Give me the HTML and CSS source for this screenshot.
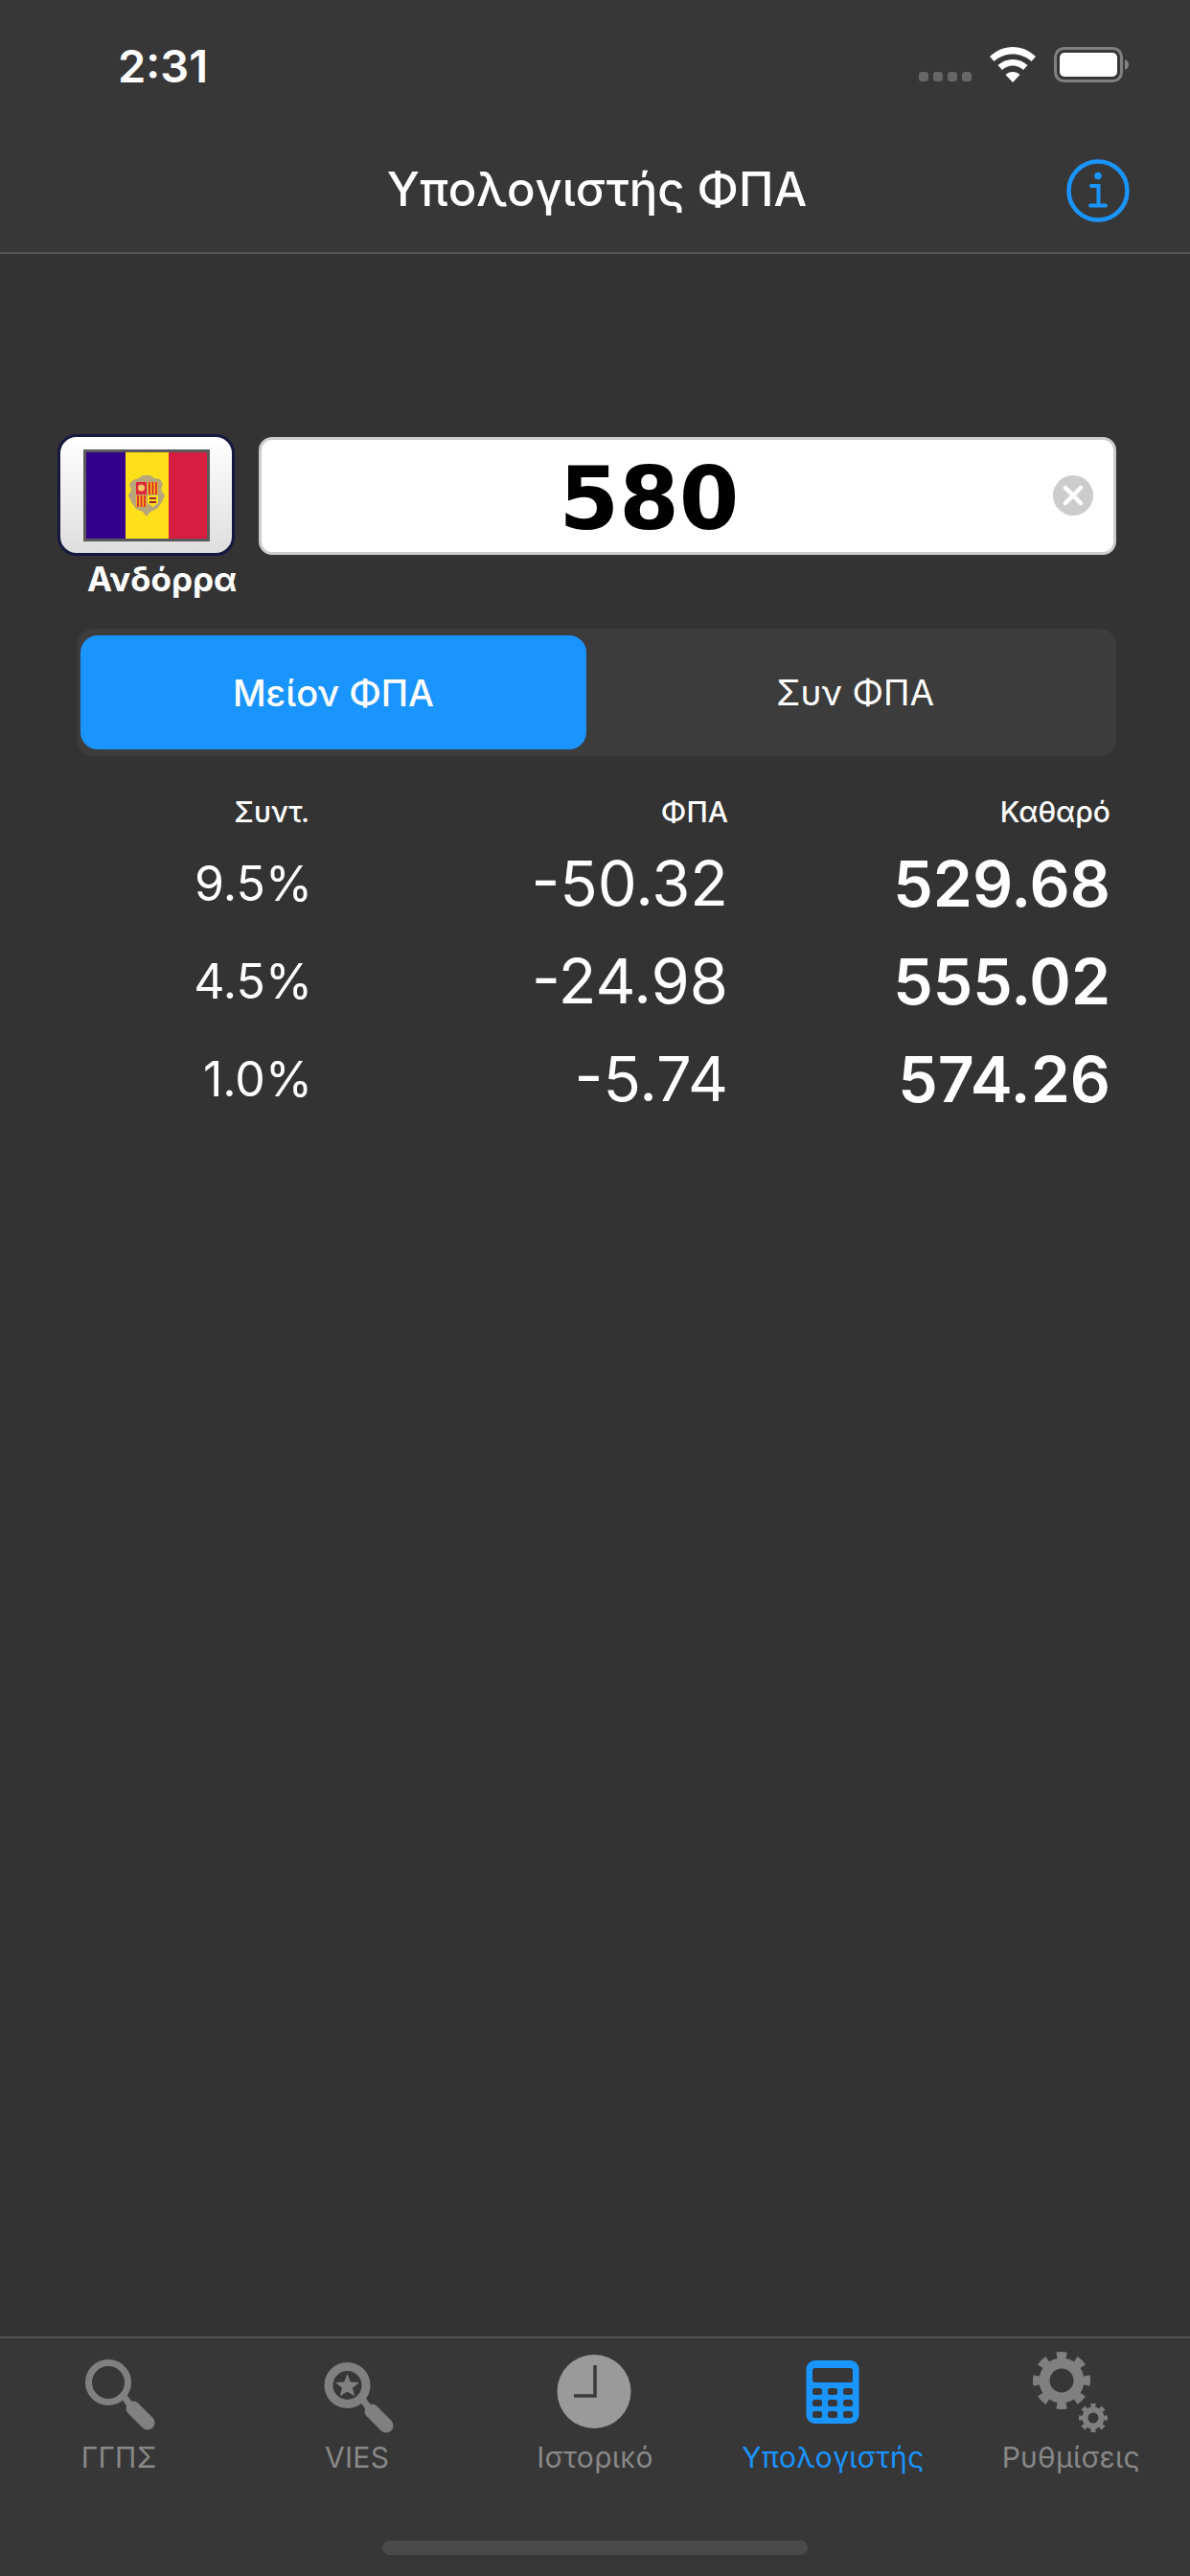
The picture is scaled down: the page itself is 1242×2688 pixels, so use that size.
FILE: index.html
```html
<!DOCTYPE html>
<html lang="el">
<head>
<meta charset="utf-8">
<title>Υπολογιστής ΦΠΑ</title>
<link rel="stylesheet" href="styles.css">
</head>
<body>
<div class="app">
  <header class="top">
    <div class="status">
      <span class="time">2:31</span>
      <div class="status-icons">
        <div class="signal"><i></i><i></i><i></i><i></i></div>
        <svg class="wifi" width="48" height="37" viewBox="0 0 48 37">
          <path d="M24 0C15 0 7 3.500 0 10L4.500 15C10 10 17 7.500 24 7.500S38 10 43.500 15L48 10C41 3.500 33 0 24 0Z" fill="#fff"/>
          <path d="M24 13C18 13 13 15 8.500 19L13 24C16 21 20 19.500 24 19.500S32 21 35 24L39.500 19C35 15 30 13 24 13Z" fill="#fff"/>
          <path d="M24 26C21 26 18.500 27 16.500 29L24 37L31.500 29C29.500 27 27 26 24 26Z" fill="#fff"/>
        </svg>
        <svg class="battery" width="80" height="38" viewBox="0 0 80 38">
          <rect x="1.500" y="1.500" width="69" height="34" rx="9" fill="none" stroke="#808080" stroke-width="3"/>
          <rect x="6" y="6" width="60" height="25" rx="5" fill="#fff"/>
          <path d="M74 13C77 14 78 16 78 18.500S77 23 74 24Z" fill="#808080"/>
        </svg>
      </div>
    </div>
    <div class="nav">
      <h1 class="nav-title">Υπολογιστής ΦΠΑ</h1>
      <svg class="info" width="66" height="66" viewBox="0 0 66 66">
        <circle cx="33" cy="33" r="30.500" fill="none" stroke="#1a94ff" stroke-width="4.500"/>
        <circle cx="33" cy="17.500" r="3.800" fill="#1a94ff"/>
        <path d="M26 28H33.500V47M25 48.500H41" fill="none" stroke="#1a94ff" stroke-width="4" stroke-linecap="round"/>
      </svg>
    </div>
  </header>

  <main class="main">
    <div class="entry">
      <div class="country">
        <button class="flag-btn" type="button">
          <svg class="flag" width="132" height="96" viewBox="0 0 132 96">
            <rect width="132" height="96" fill="#5a5a5a"/>
            <rect x="3" y="3" width="41" height="90" fill="#33008c"/>
            <rect x="44" y="3" width="45" height="90" fill="#fde01a"/>
            <rect x="89" y="3" width="40" height="90" fill="#d81e40"/>
            <path d="M52 32L58 30L62 27H70L74 30L80 31L83 36L81 42L85 48L82 55L77 62L70 65L66 70L62 65L55 62L50 55L47 48L50 42L48 36Z" fill="#b8a57a"/>
            <rect x="55" y="34" width="11" height="13" fill="#e0263a"/>
            <circle cx="60.500" cy="40" r="3.500" fill="#f7c766"/>
            <rect x="67" y="34" width="11" height="13" fill="#f5b21a"/>
            <path d="M69 34V47M72.500 34V47M76 34V47" stroke="#d81e30" stroke-width="1.600"/>
            <rect x="55" y="48" width="11" height="12" fill="#f5b21a"/>
            <path d="M57 48V60M60.500 48V60M64 48V60" stroke="#d81e30" stroke-width="1.600"/>
            <path d="M67 48H78V56L72.500 60L67 56Z" fill="#fde01a"/>
            <path d="M69 51H76M69 55H76" stroke="#a02030" stroke-width="2"/>
          </svg>
        </button>
        <span class="country-name">Ανδόρρα</span>
      </div>
      <div class="amount">
        <span class="amount-value">580</span>
        <svg class="clear" width="42" height="42" viewBox="0 0 42 42">
          <circle cx="21" cy="21" r="21" fill="#ccc"/>
          <path d="M13 13L29 29M29 13L13 29" stroke="#fff" stroke-width="4.500" stroke-linecap="round"/>
        </svg>
      </div>
    </div>

    <div class="segment">
      <div class="seg seg-on">Μείον ΦΠΑ</div>
      <div class="seg seg-off">Συν ΦΠΑ</div>
    </div>

    <div class="table">
      <span class="th th-rate">Συντ.</span><span class="th">ΦΠΑ</span><span class="th">Καθαρό</span>
      <span class="rate">9.5%</span><span class="vat">-50.32</span><span class="net">529.68</span>
      <span class="rate">4.5%</span><span class="vat">-24.98</span><span class="net">555.02</span>
      <span class="rate">1.0%</span><span class="vat">-5.74</span><span class="net">574.26</span>
    </div>
  </main>

  <nav class="tabs">
    <div class="tab-row">
      <div class="tab">
        <svg class="tab-icon" width="90" height="90" viewBox="0 0 90 90">
          <circle cx="34" cy="36" r="20.500" fill="none" stroke="#808080" stroke-width="7"/>
          <path d="M50 50L57 60" stroke="#808080" stroke-width="7"/>
          <path d="M60 63L75 78" stroke="#808080" stroke-width="15" stroke-linecap="round"/>
        </svg>
        <span>ΓΓΠΣ</span>
      </div>
      <div class="tab">
        <svg class="tab-icon" width="90" height="90" viewBox="0 0 90 90">
          <circle cx="34.500" cy="39" r="19.500" fill="none" stroke="#808080" stroke-width="9"/>
          <path d="M34.500 27L37.800 35.500L47 36L39.900 41.700L42.300 50.500L34.500 45.500L26.700 50.500L29.100 41.700L22 36L31.200 35.500Z" fill="#808080"/>
          <path d="M50 53L57 63" stroke="#808080" stroke-width="7"/>
          <path d="M60 66L75 81" stroke="#808080" stroke-width="15" stroke-linecap="round"/>
        </svg>
        <span>VIES</span>
      </div>
      <div class="tab">
        <svg class="tab-icon" width="90" height="90" viewBox="0 0 90 90">
          <circle cx="44" cy="45.500" r="38.500" fill="#9a9a9a"/>
          <path d="M23 50H45V18" fill="none" stroke="#3a3a3a" stroke-width="3.500"/>
        </svg>
        <span>Ιστορικό</span>
      </div>
      <div class="tab tab-on">
        <svg class="tab-icon" width="90" height="90" viewBox="0 0 90 90">
          <rect x="17.500" y="13" width="55" height="66" rx="9" fill="#1a94ff"/>
          <g fill="#373737">
            <rect x="24" y="21" width="42" height="15" rx="2.500"/>
            <rect x="24" y="42" width="10" height="7" rx="2.500"/><rect x="40" y="42" width="10" height="7" rx="2.500"/><rect x="56" y="42" width="10" height="7" rx="2.500"/>
            <rect x="24" y="54" width="10" height="7" rx="2.500"/><rect x="40" y="54" width="10" height="7" rx="2.500"/><rect x="56" y="54" width="10" height="7" rx="2.500"/>
            <rect x="24" y="66" width="10" height="7" rx="2.500"/><rect x="40" y="66" width="10" height="7" rx="2.500"/><rect x="56" y="66" width="10" height="7" rx="2.500"/>
          </g>
        </svg>
        <span>Υπολογιστής</span>
      </div>
      <div class="tab">
        <svg class="tab-icon" width="90" height="90" viewBox="0 0 90 90">
          <g fill="none" stroke="#808080">
            <circle cx="35" cy="34" r="18" stroke-width="11"/>
            <circle cx="35" cy="34" r="26.500" stroke-width="7" pathLength="16" stroke-dasharray="1 1" stroke-dashoffset="0.500"/>
            <circle cx="68" cy="73" r="8.500" stroke-width="6"/>
            <circle cx="68" cy="73" r="13" stroke-width="4" pathLength="16" stroke-dasharray="1 1" stroke-dashoffset="0.500"/>
          </g>
        </svg>
        <span>Ρυθμίσεις</span>
      </div>
    </div>
    <div class="home"></div>
  </nav>
</div>
</body>
</html>
```

FILE: styles.css
```css
* { box-sizing: border-box; }
html, body { margin: 0; padding: 0; }
body { background: #333; color: #fff; font-family: Inter, "Liberation Sans", sans-serif; }
.app { width: 1242px; height: 2688px; display: flex; flex-direction: column; overflow: hidden; }

.top { background: #373737; border-bottom: 2px solid #555; height: 265px; display: flex; flex-direction: column; }
.status { height: 132px; display: flex; justify-content: space-between; padding: 41px 62px 0 123px; }
.time { font-size: 47px; font-weight: 600; line-height: 56px; }
.status-icons { display: flex; align-items: flex-start; padding-top: 8px; }
.signal { display: flex; gap: 5px; margin: 26px 19px 0 0; }
.signal i { width: 10px; height: 10px; border-radius: 3px; background: #666; display: block; }
.wifi { margin-right: 19px; }
.nav { position: relative; flex: 1; display: flex; justify-content: center; align-items: flex-start; padding: 33px 0 0 4px; }
.nav-title { margin: 0; font-size: 49px; font-weight: 500; line-height: 66px; }
.info { position: absolute; right: 63px; top: 34px; }

.main { flex: 1; padding-top: 188px; }
.entry { display: flex; align-items: flex-start; padding: 0 77px 0 60px; gap: 25px; }
.country { width: 185px; flex: none; }
.flag-btn { display: flex; align-items: center; justify-content: center; width: 185px; height: 127px; padding: 0; border: 3px solid #15193f; border-radius: 20px; background: linear-gradient(#fff, #dedede); }
.country-name { display: block; width: 154px; margin: 2px 0 0 31px; font-size: 35px; font-weight: 700; line-height: 44px; white-space: nowrap; }
.amount { position: relative; flex: 1; height: 123px; margin-top: 3px; padding: 5px 80px 0 0; display: flex; align-items: center; justify-content: center; background: #fff; border: 3px solid #ccc; border-radius: 14px; }
.amount-value { color: #000; font-family: "DejaVu Sans", sans-serif; font-size: 90px; font-weight: 700; }
.clear { position: absolute; right: 21px; top: 37px; }

.segment { display: flex; margin: 30px 77px 0 80px; height: 133px; padding: 7px 4px; background: #3c3c3c; border-radius: 18px; }
.seg { display: flex; align-items: center; justify-content: center; font-size: 37px; border-radius: 18px; }
.seg-on { flex: none; width: 528px; background: #1a94ff; font-size: 38px; font-weight: 500; }
.seg-off { flex: 1; padding-left: 12px; }

.table { display: grid; grid-template-columns: 243px 434px 399px; grid-template-rows: 42px; grid-auto-rows: 102px; margin: 40px 0 0 83px; text-align: right; }
.th { font-size: 30px; font-weight: 500; line-height: 36px; align-self: start; }
.th-rate { padding-right: 3px; }
.rate, .vat, .net { display: block; line-height: 102px; }
.rate { font-size: 50px; font-weight: 400; }
.vat { font-size: 65px; font-weight: 400; }
.net { font-size: 66px; font-weight: 600; }

.tabs { background: #373737; border-top: 2px solid #555; height: 250px; display: flex; flex-direction: column; }
.tab-row { display: flex; padding-top: 10px; }
.tab { width: 20%; display: flex; flex-direction: column; align-items: center; color: #888; font-size: 30px; line-height: 36px; letter-spacing: 0.3px; }
.tab-on { color: #1a94ff; }
.tab-icon { display: block; margin-bottom: 6px; }
.home { width: 444px; height: 15px; margin: 69px auto 0; border-radius: 8px; background: #4a4a4a; }
```
